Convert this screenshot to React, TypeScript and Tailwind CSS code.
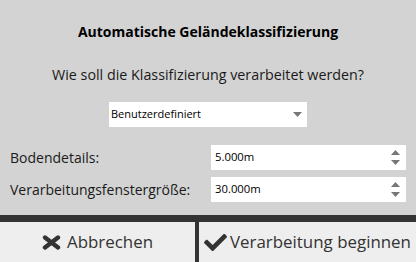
import React from 'react';
import { FaCheck } from 'react-icons/fa';

const font = { fontFamily: '"Open Sans", "Noto Sans", sans-serif' };

const Caret: React.FC<{ up?: boolean }> = ({ up }) => (
    <svg width="9" height="5" viewBox="0 0 9 5" className="block">
        {up ? <polygon points="0,5 9,5 4.5,0" fill="#777777" /> : <polygon points="0,0 9,0 4.5,5" fill="#777777" />}
    </svg>
);

const CrossIcon: React.FC = () => (
    <svg width="19" height="15" viewBox="0 0 19 15" className="block">
        <path d="M3 2.5 L16 12.5 M16 2.5 L3 12.5" stroke="#333333" strokeWidth="4.4" strokeLinecap="round" />
    </svg>
);

const SpinBox: React.FC<{ value: string }> = ({ value }) => (
    <div className="flex h-[25px] w-[195px] items-center justify-between bg-white pl-[4px] pr-[6px]">
        <span className="text-[11.3px] text-black">{value}</span>
        <div className="flex flex-col gap-[5px]">
            <Caret up />
            <Caret />
        </div>
    </div>
);

const App: React.FC = () => {
    return (
        <div className="flex h-[262px] w-[416px] flex-col bg-[#d3d3d3] text-[#1a1a1a]" style={font}>
            {/* Header */}
            <div className="flex h-[62px] items-center justify-center">
                <h1 className="text-[14px] font-bold text-black">Automatische Geländeklassifizierung</h1>
            </div>
            <div className="flex h-[26px] items-center justify-center">
                <p className="text-[14.3px]">Wie soll die Klassifizierung verarbeitet werden?</p>
            </div>

            {/* Mode select */}
            <div className="mt-[14px] flex justify-center">
                <div className="flex h-[25px] w-[198px] items-center justify-between bg-white pl-[2px] pr-[5px]">
                    <span className="text-[11px] text-black">Benutzerdefiniert</span>
                    <Caret />
                </div>
            </div>

            {/* Parameters */}
            <div className="mt-[18px] flex flex-col gap-[7px] pl-[10px] pr-[10px]">
                <div className="flex items-center justify-between">
                    <span className="text-[14px]">Bodendetails:</span>
                    <SpinBox value="5.000m" />
                </div>
                <div className="flex items-center justify-between">
                    <span className="text-[14px]">Verarbeitungsfenstergröße:</span>
                    <SpinBox value="30.000m" />
                </div>
            </div>

            {/* Buttons */}
            <div className="mt-auto flex h-[47px] border-t-[7px] border-[#333333] bg-[#333333] text-[#333333]">
                <button className="flex w-[195px] items-center justify-center gap-[6px] bg-[#eeeeee] text-[16.9px]">
                    <CrossIcon />
                    <span>Abbrechen</span>
                </button>
                <button className="ml-[4px] flex flex-1 items-center justify-center gap-[3px] bg-[#eeeeee] text-[16.9px]">
                    <FaCheck className="h-[23px] w-[23px]" />
                    <span>Verarbeitung beginnen</span>
                </button>
            </div>
        </div>
    );
};

export default App;
